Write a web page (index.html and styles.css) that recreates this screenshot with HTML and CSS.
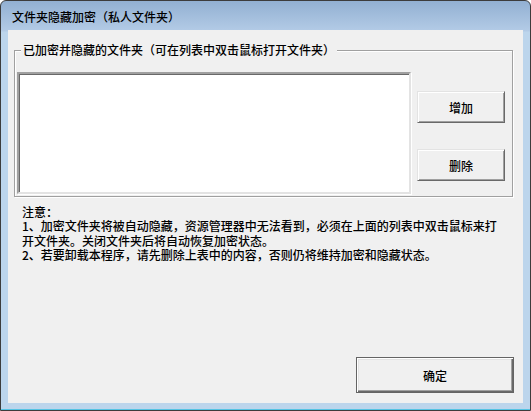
FILE: index.html
```html
<!DOCTYPE html>
<html lang="zh-CN">
<head>
<meta charset="utf-8">
<title>文件夹隐藏加密（私人文件夹）</title>
<link rel="stylesheet" href="styles.css">
</head>
<body>
<div class="window">
  <div class="titlebar">文件夹隐藏加密（私人文件夹）</div>
  <div class="client">
    <div class="group">
      <span class="legend">已加密并隐藏的文件夹（可在列表中双击鼠标打开文件夹）</span>
      <div class="listbox"></div>
      <div class="side-buttons">
        <button class="btn">增加</button>
        <button class="btn">删除</button>
      </div>
    </div>
    <div class="notes">注意：<br>1、加密文件夹将被自动隐藏，资源管理器中无法看到，必须在上面的列表中双击鼠标来打<br>开文件夹。关闭文件夹后将自动恢复加密状态。<br>2、若要卸载本程序，请先删除上表中的内容，否则仍将维持加密和隐藏状态。</div>
    <button class="btn btn-default">确定</button>
  </div>
</div>
</body>
</html>
```
FILE: styles.css
```css
* { box-sizing: border-box; }
html, body { margin: 0; padding: 0; background: #ffffff; }
body {
  font-family: "Noto Sans CJK SC", "Liberation Sans", sans-serif;
  font-size: 12px;
  font-weight: 500;
  color: #000;
}
.window {
  width: 531px;
  height: 411px;
  border: 1px solid #3c3c3c;
  border-radius: 6px 6px 0 0;
  background: linear-gradient(to bottom, #92b0d2 0px, #b3cbe6 30px, #bcd5ec 31px, #bcd5ec 100%);
  box-shadow: inset 0 -1px 0 #55c3e3;
  padding: 0 7px 7px 7px;
  display: flex;
  flex-direction: column;
}
.titlebar {
  height: 29px;
  padding-left: 4px;
  display: flex;
  align-items: center;
  padding-top: 2px;
  color: #000;
  font-size: 12px;
}
.client {
  flex: 1;
  background: #f0f0f0;
  display: flex;
  flex-direction: column;
  padding-top: 20px;
}
.group {
  position: relative;
  margin-left: 6px;
  width: 499px;
  height: 147px;
  border: 1px solid #a0a0a0;
  box-shadow: inset 1px 1px 0 #fff, 1px 1px 0 #fff;
  padding: 21px 0 0 2px;
  display: flex;
  align-items: flex-start;
}
.legend {
  position: absolute;
  left: 6px;
  top: -9px;
  padding: 0 2px;
  background: #f0f0f0;
  line-height: 16px;
}
.listbox {
  width: 394px;
  height: 122px;
  background: #fff;
  border-style: solid;
  border-width: 2px;
  border-color: #a0a0a0 #e3e3e3 #e3e3e3 #a0a0a0;
  box-shadow: inset 1px 1px 0 #696969, 1px 1px 0 #fff;
}
.side-buttons {
  margin-left: 6px;
  margin-top: 19px;
  display: flex;
  flex-direction: column;
  gap: 26px;
}
.btn {
  font-family: "Noto Sans CJK SC", "Liberation Sans", sans-serif;
  font-size: 12px;
  font-weight: 500;
  color: #000;
  width: 88px;
  height: 32px;
  background: #f0f0f0;
  border-style: solid;
  border-width: 1px;
  border-color: #e3e3e3 #696969 #696969 #e3e3e3;
  box-shadow: inset 1px 1px 0 #ffffff, inset -1px -1px 0 #a0a0a0;
  padding: 0;
  margin: 0;
}
.notes {
  margin: 8px 0 0 14px;
  line-height: 14.3px;
  white-space: nowrap;
}
.btn-default {
  width: 158px;
  height: 36px;
  margin-top: auto;
  margin-bottom: 10px;
  margin-right: 9px;
  align-self: flex-end;
  border: 1px solid #646464;
  box-shadow: inset 1px 1px 0 #ffffff, inset -1px -1px 0 #696969, inset -2px -2px 0 #a0a0a0, inset 2px 2px 0 #e3e3e3;
}
```
